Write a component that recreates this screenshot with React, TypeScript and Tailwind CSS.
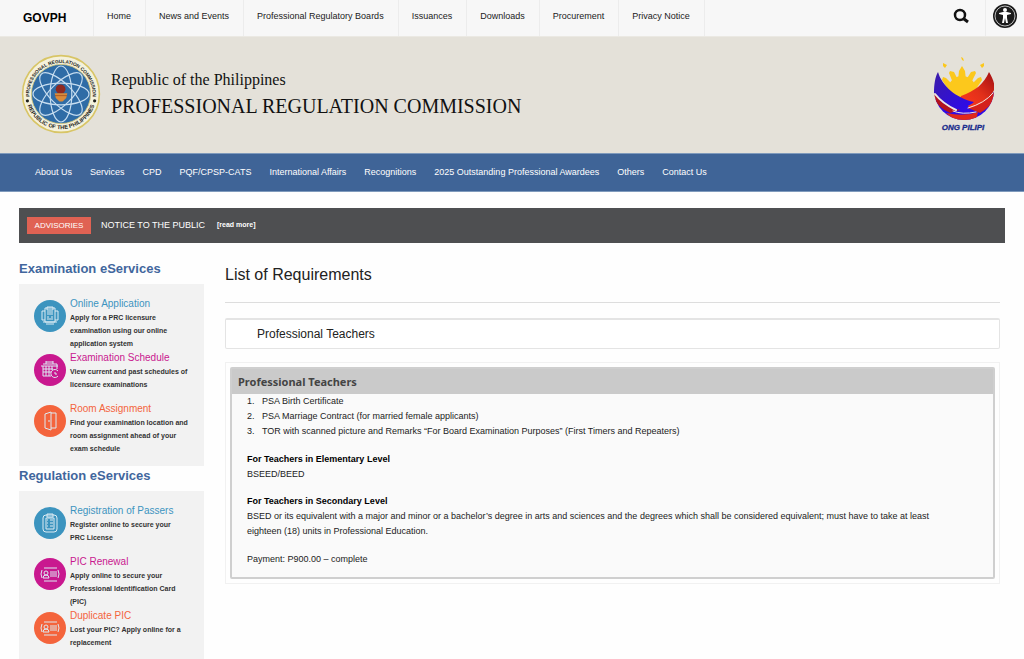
import React from 'react';

const topLinks = [
  'Home',
  'News and Events',
  'Professional Regulatory Boards',
  'Issuances',
  'Downloads',
  'Procurement',
  'Privacy Notice',
];

const mainLinks = [
  'About Us',
  'Services',
  'CPD',
  'PQF/CPSP-CATS',
  'International Affairs',
  'Recognitions',
  '2025 Outstanding Professional Awardees',
  'Others',
  'Contact Us',
];

const requirements = [
  'PSA Birth Certificate',
  'PSA Marriage Contract (for married female applicants)',
  'TOR with scanned picture and Remarks “For Board Examination Purposes” (First Timers and Repeaters)',
];

type Service = {
  title: string;
  lines: string[];
  text: string;
  bg: string;
  icon: React.ReactNode;
};

const ApplicationIcon = () => (
  <>
    <path d="M11 8h10v14H11z" />
    <path d="M13 7h6v3h-6zM13 12h6M13 14h6M13 17h2M17 17h2M13 19h6" />
    <path d="M11 11H8v9h3M21 11h3v9h-3M9 22h14M12 24h8" />
  </>
);

const ScheduleIcon = () => (
  <>
    <path d="M17 22H9V12M7 12h17M9 10h14v5M12 7v3M19 7v3M12 8h7" />
    <path d="M9 15h10M9 18h8M12 12v10M15 12v10M18 12v4" />
    <path d="M24 17a4 4 0 1 0 0 5M21 18v2h2" />
  </>
);

const DoorIcon = () => (
  <>
    <path d="M11 9v14l6 2V7l-6 2z" />
    <path d="M17 8h5v15h-5M15 15v2" />
  </>
);

const ClipboardIcon = () => (
  <>
    <rect x="9" y="8" width="14" height="17" rx="3" />
    <path d="M13 7h6v3h-6zM12 11h8v11h-8z" />
    <path d="M13 13h1M16 13h3M13 16h1M16 16h3M13 19h1M16 19h3" />
  </>
);

const IdCardIcon = () => (
  <>
    <path d="M10 10h13M10 23h13M8 12q-2 4 0 8M24 12q2 4 0 8" />
    <circle cx="12" cy="15" r="2" />
    <path d="M9 20q0-3 3-3t3 3zM16 14h7M16 16h7M16 18h7" />
  </>
);

const examServices: Service[] = [
  {
    title: 'Online Application',
    lines: ['Apply for a PRC licensure', 'examination using our online', 'application system'],
    text: 'text-[#3c94bf]',
    bg: 'bg-[#3c94bf]',
    icon: <ApplicationIcon />,
  },
  {
    title: 'Examination Schedule',
    lines: ['View current and past schedules of', 'licensure examinations'],
    text: 'text-[#c9188f]',
    bg: 'bg-[#c9188f]',
    icon: <ScheduleIcon />,
  },
  {
    title: 'Room Assignment',
    lines: ['Find your examination location and', 'room assignment ahead of your', 'exam schedule'],
    text: 'text-[#f4643c]',
    bg: 'bg-[#f4643c]',
    icon: <DoorIcon />,
  },
];

const regulationServices: Service[] = [
  {
    title: 'Registration of Passers',
    lines: ['Register online to secure your', 'PRC License'],
    text: 'text-[#3c94bf]',
    bg: 'bg-[#3c94bf]',
    icon: <ClipboardIcon />,
  },
  {
    title: 'PIC Renewal',
    lines: ['Apply online to secure your', 'Professional Identification Card', '(PIC)'],
    text: 'text-[#c9188f]',
    bg: 'bg-[#c9188f]',
    icon: <IdCardIcon />,
  },
  {
    title: 'Duplicate PIC',
    lines: ['Lost your PIC? Apply online for a', 'replacement'],
    text: 'text-[#f4643c]',
    bg: 'bg-[#f4643c]',
    icon: <IdCardIcon />,
  },
];

const Seal: React.FC = () => (
  <svg viewBox="0 0 200 200" className="size-20 shrink-0" role="img" aria-label="Professional Regulation Commission seal">
    <defs>
      <path id="seal-top" d="M22 114A79 79 0 1 1 178 114" />
      <path id="seal-bottom" d="M12 112A89 89 0 0 0 188 112" />
    </defs>
    <circle cx="100" cy="100" r="96" fill="#f4f1dc" stroke="#d8c566" strokeWidth="4" />
    <circle cx="100" cy="100" r="74" fill="#2f6ca6" stroke="#cfc47a" strokeWidth="2" />
    <g fill="none" stroke="#c6ddf0" strokeWidth="3">
      <ellipse cx="100" cy="100" rx="70" ry="27" />
      <ellipse cx="100" cy="100" rx="70" ry="27" transform="rotate(45 100 100)" />
      <ellipse cx="100" cy="100" rx="70" ry="27" transform="rotate(90 100 100)" />
      <ellipse cx="100" cy="100" rx="70" ry="27" transform="rotate(135 100 100)" />
    </g>
    <circle cx="99" cy="88" r="12" fill="#8e2a22" />
    <path d="M84 98h32l-3 12-9 9h-8l-9-9z" fill="#d98a3a" />
    <path d="M85 104h30" stroke="#a4501f" strokeWidth="2" />
    <g fill="#1f1f1c" fontFamily="'Liberation Sans', sans-serif" fontWeight="700" textAnchor="middle">
      <text fontSize="12">
        <textPath href="#seal-top" startOffset="50%">PROFESSIONAL REGULATION COMMISSION</textPath>
      </text>
      <text fontSize="14">
        <textPath href="#seal-bottom" startOffset="50%">REPUBLIC OF THE PHILIPPINES</textPath>
      </text>
    </g>
    <circle cx="16" cy="117" r="4" fill="#1f1f1c" />
    <circle cx="184" cy="117" r="4" fill="#1f1f1c" />
  </svg>
);

const BagongLogo: React.FC = () => (
  <svg viewBox="0 0 60 76" className="h-[76px] w-[60px] shrink-0" role="img" aria-label="Bagong Pilipinas">
    <defs>
      <linearGradient id="bp-red" x1="0" y1="1" x2="1" y2="0">
        <stop offset="0" stopColor="#ff3a1c" />
        <stop offset="0.5" stopColor="#e2301a" />
        <stop offset="1" stopColor="#a00d12" />
      </linearGradient>
      <linearGradient id="bp-blue" x1="0" y1="0" x2="1" y2="1">
        <stop offset="0" stopColor="#3b1ca8" />
        <stop offset="1" stopColor="#2c08f0" />
      </linearGradient>
      <clipPath id="bp-bowl">
        <circle cx="30" cy="34" r="30" />
      </clipPath>
    </defs>
    <g fill="#fcc81c">
      <circle cx="28" cy="34" r="14" />
      <path d="M24 24l1-9 3-5 3 5 1 9zM19 27l-4-10 1-2 4 1 4 8zM37 27l5-10-1-2-4 1-5 8zM14 33l-6-9 1-3 3 1 8 8zM42 33l6-9-1-3-3 1-8 8z" />
      <path d="M27 1l2 1 1 3-2-1zM9 7l4 2-2 3-2-2zM46 9l4-2 0 3-2 2z" />
    </g>
    <g clipPath="url(#bp-bowl)">
      <path d="M0 42Q18 50 40 44L60 36V66H0z" fill="#2f0ce6" />
      <path d="M0 37Q8 46 20 51L26 54L16 57Q5 52 0 43z" fill="#b3131d" />
      <path d="M60 36Q52 46 34 52L46 57Q58 50 62 40z" fill="#d4201c" />
      <path d="M12 57Q30 61 44 56L42 64H20z" fill="#e0281d" />
    </g>
    <path d="M55 16C60 24 62 32 59 36C53 45 46 49 36 52L26 43L27 40C41 35 50 28 55 16z" fill="url(#bp-red)" />
    <path d="M4 16C8 30 22 42 40 46C35 50 30 52 22 54C12 50 4 44 0 37C0 29 1 21 4 16z" fill="url(#bp-blue)" />
    <g fill="none" stroke="#efe6e2" strokeWidth="1" strokeLinecap="round">
      <path d="M1 38Q8 47 22 54" strokeWidth="2" />
      <path d="M59 37Q51 47 34 52" />
      <path d="M19 55Q28 59 42 56" />
    </g>
    <text
      x="29"
      y="74"
      fill="#172a8c"
      stroke="#172a8c"
      strokeWidth="0.3"
      fontFamily="'Liberation Sans', sans-serif"
      fontSize="8"
      fontWeight="700"
      fontStyle="italic"
      textAnchor="middle"
    >
      ONG PILIPI
    </text>
  </svg>
);

const ServicePanel: React.FC<{ title: string; services: Service[] }> = ({ title, services }) => (
  <section>
    <h2 className="text-[13px] leading-5 font-bold text-[#41669d]">{title}</h2>
    <ul className="mt-[5px] bg-[#f2f2f2] pt-3 pr-1 pb-[11px] pl-[15px]">
      {services.map(service => (
        <li key={service.title} className="flex min-h-[51px] items-start gap-1">
          <span className={`mt-1 size-8 shrink-0 rounded-full ${service.bg}`}>
            <svg viewBox="0 0 32 32" className="size-8" fill="none" stroke="#dcebf3" strokeWidth="1" aria-hidden="true">
              {service.icon}
            </svg>
          </span>
          <div className="whitespace-nowrap">
            <h3 className={`text-[10px] leading-[15px] ${service.text}`}>
              <a href="#">{service.title}</a>
            </h3>
            <p className="text-[7px] leading-[13px] font-bold text-[#333]">
              {service.lines.map(line => (
                <span key={line} className="block">{line}</span>
              ))}
            </p>
          </div>
        </li>
      ))}
    </ul>
  </section>
);

const App: React.FC = () => {
  return (
    <div className="min-h-screen bg-[#fefefe] font-['Liberation_Sans',Arial,sans-serif] text-[#222]">
      <nav className="flex h-9 items-stretch bg-[#f7f7f7]" aria-label="Government links">
        <a href="#" className="flex w-[93px] items-center pl-[23px] text-[12px] font-bold text-black">GOVPH</a>
        <ul className="flex border-l border-[#ececec]">
          {topLinks.map(link => (
            <li key={link} className="border-r border-[#ececec]">
              <a href="#" className="block pt-[9px] pr-[14px] pl-[13px] text-[9px] leading-[15px]">{link}</a>
            </li>
          ))}
        </ul>
        <div className="ml-auto flex">
          <button type="button" aria-label="Search" className="flex w-12 items-center justify-center pb-1">
            <svg viewBox="0 0 16 16" className="size-4" fill="none" stroke="#111" strokeWidth="2">
              <circle cx="7" cy="7" r="5" strokeWidth="2.500" />
              <path d="M11 11l4 3" strokeWidth="3" />
            </svg>
          </button>
          <button type="button" aria-label="Accessibility" className="flex w-[39px] items-center justify-center border-l border-[#ececec] pb-1">
            <svg viewBox="0 0 24 24" className="size-6">
              <circle cx="12" cy="12" r="12" fill="#1b1b1b" />
              <circle cx="12" cy="12" r="10" fill="none" stroke="#bdbdbd" strokeWidth="1" />
              <circle cx="12" cy="6" r="2" fill="#fff" />
              <path d="M6 9l4-1h4l4 1v1l-4 1v3l1 5h-2l-1-5-1 5H9l1-5v-3l-4-1z" fill="#fff" />
            </svg>
          </button>
        </div>
      </nav>

      <header className="flex h-[117px] items-center justify-between border-t border-[#ebe9e3] bg-[#e4e1d9] pr-[30px] pb-[2px] pl-[21px]">
        <a href="#" className="flex items-center gap-[10px] font-['Liberation_Serif',serif] text-[#111]">
          <Seal />
          <span>
            <span className="block text-[16px] leading-6">Republic of the Philippines</span>
            <span className="block text-[20px] leading-7">PROFESSIONAL REGULATION COMMISSION</span>
          </span>
        </a>
        <BagongLogo />
      </header>

      <nav className="border-y border-[#7f9abc] bg-[#3f6497]" aria-label="Main">
        <ul className="flex h-[37px] items-center gap-[18px] px-[35px] text-[9px] text-white">
          {mainLinks.map(link => (
            <li key={link}><a href="#">{link}</a></li>
          ))}
        </ul>
      </nav>

      <div className="mx-[19px] mt-4 flex h-[35px] items-center bg-[#4e4f51] px-2 text-white">
        <span className="flex h-[17px] w-16 items-center justify-center bg-[#e06253] text-[8px]">ADVISORIES</span>
        <span className="ml-[10px] text-[9px]">NOTICE TO THE PUBLIC</span>
        <a href="#" className="ml-3 text-[7px] font-bold">[read more]</a>
      </div>

      <div className="mt-4 flex items-start gap-[21px] pr-6 pl-[19px]">
        <aside className="w-[185px] shrink-0">
          <ServicePanel title="Examination eServices" services={examServices} />
          <ServicePanel title="Regulation eServices" services={regulationServices} />
        </aside>

        <main className="min-w-0 flex-1">
          <h1 className="pt-1 text-[16px] leading-6">List of Requirements</h1>
          <hr className="mt-[15px] border-[#ddd]" />
          <h2 className="mt-[15px] rounded-[2px] border border-t-2 border-[#e4e4e4] bg-white pl-[31px] text-[12px] leading-7">
            Professional Teachers
          </h2>

          <section className="mt-[13px] border border-[#f1f1f1] p-1">
            <div className="rounded-[2px] border-2 border-[#cfcfcf] bg-[#fafafa]">
              <h3 className="bg-[#cacaca] pl-[6px] font-['Noto_Sans',sans-serif] text-[11px] leading-[25px] font-bold text-[#444]">
                Professional Teachers
              </h3>
              <div className="pr-6 pb-[10px] pl-[15px] text-[9px] leading-[15px]">
                <ol>
                  {requirements.map((item, i) => (
                    <li key={item} className="flex">
                      <span className="w-[15px] shrink-0">{i + 1}.</span>
                      <span>{item}</span>
                    </li>
                  ))}
                </ol>
                <h4 className="mt-[13px] font-bold text-black">For Teachers in Elementary Level</h4>
                <p>BSEED/BEED</p>
                <h4 className="mt-3 font-bold text-black">For Teachers in Secondary Level</h4>
                <p>
                  BSED or its equivalent with a major and minor or a bachelor’s degree in arts and sciences and the degrees which shall be considered equivalent; must have to take at least<br />
                  eighteen (18) units in Professional Education.
                </p>
                <p className="mt-[13px]">Payment: P900.00 – complete</p>
              </div>
            </div>
          </section>
        </main>
      </div>
    </div>
  );
};

export default App;
